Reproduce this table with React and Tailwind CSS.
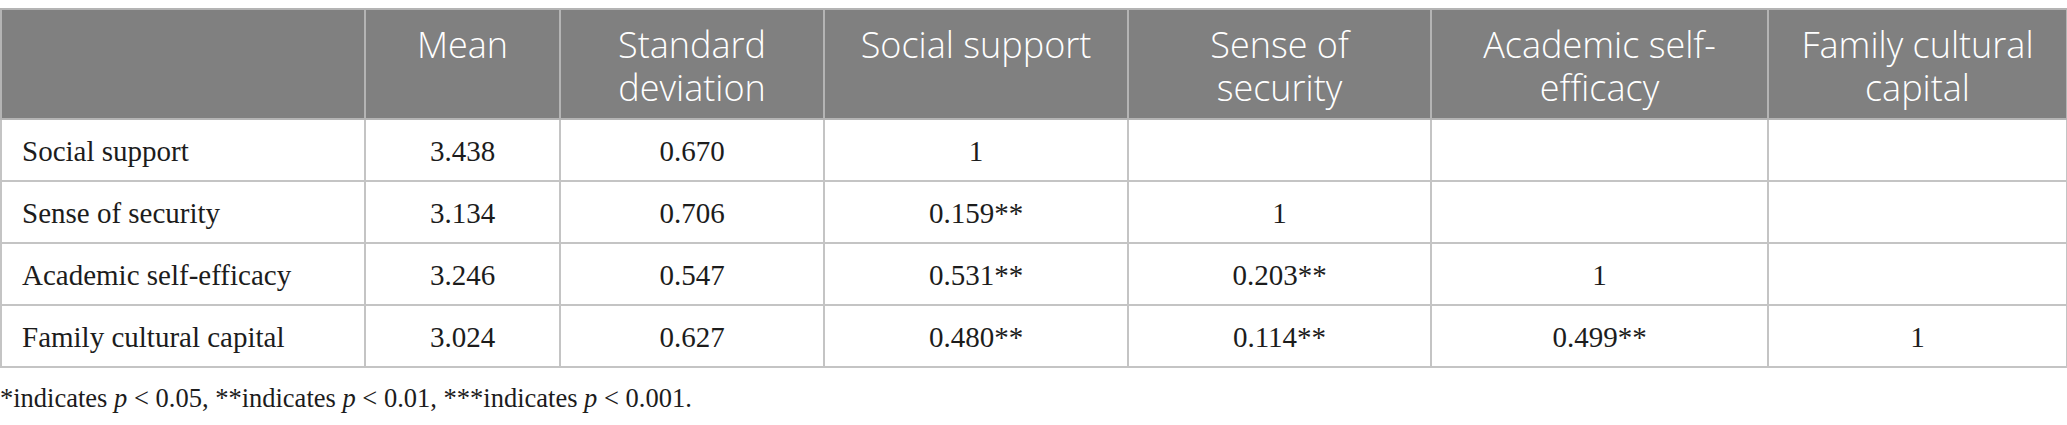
const head = [
  ["Mean"],
  ["Standard", "deviation"],
  ["Social support"],
  ["Sense of", "security"],
  ["Academic self-", "efficacy"],
  ["Family cultural", "capital"],
];

const rows = [
  ["Social support", "3.438", "0.670", "1", "", "", ""],
  ["Sense of security", "3.134", "0.706", "0.159**", "1", "", ""],
  ["Academic self-efficacy", "3.246", "0.547", "0.531**", "0.203**", "1", ""],
  ["Family cultural capital", "3.024", "0.627", "0.480**", "0.114**", "0.499**", "1"],
];

const widths = ["w-[364px]", "w-[195px]", "w-[264px]", "w-[304px]", "w-[303px]", "w-[337px]", "w-[299px]"];

export default function App() {
  return (
    <div className="w-[2067px] h-[425px] bg-white pt-2">
      <table className="w-[2066px] table-fixed border-collapse">
        <colgroup>
          {widths.map((w, i) => (
            <col key={i} className={w} />
          ))}
        </colgroup>
        <thead>
          <tr className="h-[110px] bg-[#808080]">
            <th className="border-2 border-[#b4b4b4]"></th>
            {head.map((lines, i) => (
              <th
                key={i}
                className="border-2 border-[#b4b4b4] align-top pt-[13px] text-center font-light text-[36px] leading-[43px] text-white whitespace-nowrap font-['Open_Sans',sans-serif]"
              >
                {lines.map((l, j) => (
                  <div key={j}>{l}</div>
                ))}
              </th>
            ))}
          </tr>
        </thead>
        <tbody className="font-['Liberation_Serif',serif] text-[29px] text-[#1c1c1c]">
          {rows.map((r, i) => (
            <tr key={i} className="h-[62px]">
              {r.map((c, j) => (
                <td
                  key={j}
                  className={
                    "border-2 border-[#c4c4c4] pt-[3px] leading-none " +
                    (j === 0 ? "text-left pl-[20px]" : "text-center")
                  }
                >
                  {c}
                </td>
              ))}
            </tr>
          ))}
        </tbody>
      </table>
      <p className="mt-[17px] font-['Liberation_Serif',serif] text-[26.5px] leading-none text-[#1c1c1c]">
        *indicates <i>p</i> &lt; 0.05, **indicates <i>p</i> &lt; 0.01, ***indicates <i>p</i> &lt; 0.001.
      </p>
    </div>
  );
}
